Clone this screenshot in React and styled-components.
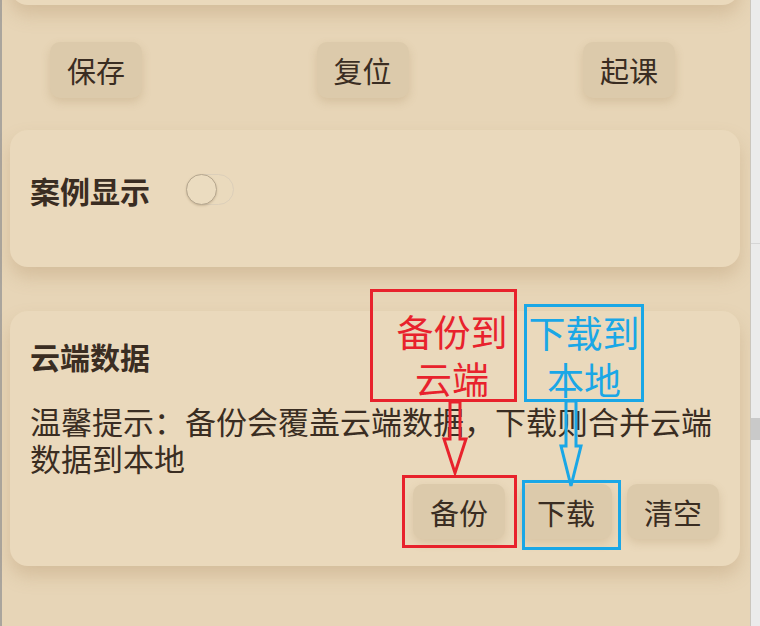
import React, { useState } from "react"
import styled, { createGlobalStyle } from "styled-components"

const GlobalStyle = createGlobalStyle`
  html, body {
    margin: 0;
    padding: 0;
    background: #e7d5b7;
  }
  body {
    font-family: "Noto Sans CJK SC", "Noto Sans", sans-serif;
    color: #3a2d22;
  }
`

const Shell = styled.div`
  display: flex;
  width: 760px;
  height: 626px;
  overflow: hidden;
`

const EdgeLine = styled.div`
  width: 2px;
  background: #aaa59d;
`

const Page = styled.main`
  flex: 1;
  display: flex;
  flex-direction: column;
  padding: 0 10px 0 8px;
  background: #e7d5b7;
`

const Scrollbar = styled.div`
  position: relative;
  width: 9px;
  background: #ebebeb;
  border-left: 1px solid #cbc6bd;
`

const ScrollMark = styled.div`
  position: absolute;
  left: 0;
  right: 0;
  top: ${p => p.top}px;
  height: ${p => p.h}px;
  background: ${p => p.dark ? "#c9c9c9" : "#d6d6d6"};
`

const Card = styled.section`
  position: relative;
  background: #ead9bc;
  border-radius: 18px;
  box-shadow: 0 10px 18px rgba(165, 130, 85, 0.28);
`

const TopCard = styled(Card)`
  height: 50px;
  margin-top: -45px;
`

const ButtonRow = styled.div`
  display: flex;
  justify-content: space-between;
  margin-top: 37px;
  padding: 0 65px 0 40px;
`

const Btn = styled.button`
  width: 92px;
  height: 56px;
  border: none;
  border-radius: 10px;
  background: #dccaab;
  box-shadow: 0 4px 10px rgba(150, 118, 75, 0.22);
  font-family: inherit;
  font-size: 29px;
  color: #3a2d22;
  padding: 0;
  cursor: pointer;
`

const CaseCard = styled(Card)`
  margin-top: 32px;
  height: 137px;
  padding: 40px 20px 0;
  box-sizing: border-box;
  display: flex;
  align-items: flex-start;
  gap: 36px;
`

const Title = styled.h2`
  width: fit-content;
  margin: 0;
  font-size: 30px;
  line-height: 40px;
  font-weight: 700;
  color: #3a2d22;
`

const Track = styled.button`
  position: relative;
  width: 48px;
  height: 31px;
  margin-top: 4px;
  padding: 0;
  border-radius: 16px;
  border: 1px solid #dccfba;
  background: ${p => p.on ? "#d2b98f" : "#eadabd"};
  cursor: pointer;
`

const Thumb = styled.span`
  position: absolute;
  top: -1px;
  left: ${p => p.on ? "17px" : "-1px"};
  width: 29px;
  height: 29px;
  border-radius: 50%;
  border: 1px solid #b6a78f;
  background: #ebdcc0;
  box-shadow: 0 1px 2px rgba(120, 95, 60, 0.25);
`

const CloudCard = styled(Card)`
  margin-top: 44px;
  padding: 25px 21px 27px 20px;
`

const Tip = styled.p`
  margin: 26px 0 0;
  font-size: 31px;
  line-height: 37px;
  color: #3a2d22;
`

const Actions = styled.div`
  display: flex;
  justify-content: flex-end;
  gap: 15px;
  margin-top: 8px;
`

const SmallBtn = styled(Btn)`
  height: 55px;
`

const Note = styled.div`
  position: absolute;
  left: ${p => p.left}px;
  top: ${p => p.top}px;
  width: ${p => p.w}px;
  height: ${p => p.h}px;
  box-sizing: border-box;
  border: 3px solid ${p => p.color};
  padding: ${p => p.pt || 0}px 0 0 ${p => p.pl || 0}px;
  color: ${p => p.color};
  font-size: 37px;
  line-height: 47px;
  text-align: center;
  pointer-events: none;
`

const Arrows = styled.svg`
  position: absolute;
  left: 0;
  top: 0;
  width: 100%;
  height: 100%;
  overflow: visible;
  pointer-events: none;
`

const RED = "#e8222c"
const BLUE = "#1aa7e6"

const App = () => {
  const [showCases, setShowCases] = useState(false)

  return (
    <>
      <GlobalStyle />
      <Shell>
        <EdgeLine />
        <Page>
          <TopCard />
          <ButtonRow>
            <Btn>保存</Btn>
            <Btn>复位</Btn>
            <Btn>起课</Btn>
          </ButtonRow>

          <CaseCard>
            <Title>案例显示</Title>
            <Track on={showCases} onClick={() => setShowCases(!showCases)}>
              <Thumb on={showCases} />
            </Track>
          </CaseCard>

          <CloudCard>
            <Title>云端数据</Title>
            <Tip>温馨提示：备份会覆盖云端数据，下载则合并云端数据到本地</Tip>
            <Actions>
              <SmallBtn>备份</SmallBtn>
              <SmallBtn>下载</SmallBtn>
              <SmallBtn>清空</SmallBtn>
            </Actions>

            {/* annotations drawn over the card */}
            <Note color={RED} left={360} top={-22} w={147} h={113} pt={16} pl={17}>
              备份到<br />云端
            </Note>
            <Note color={BLUE} left={514} top={-7} w={120} h={98} pt={2}>
              下载到<br />本地
            </Note>
            <Note color={RED} left={392} top={164} w={115} h={73} />
            <Note color={BLUE} left={512} top={169} w={99} h={70} />
            <Arrows>
              <polygon
                points="440,91 450,91 450,128 456,128 445,162 434,128 440,128"
                fill="none"
                stroke={RED}
                strokeWidth="3"
              />
              <polygon
                points="556,90 566,90 566,135 571,135 561,175 551,135 556,135"
                fill="none"
                stroke={BLUE}
                strokeWidth="3"
              />
            </Arrows>
          </CloudCard>
        </Page>
        <Scrollbar>
          <ScrollMark top={243} h={1} />
          <ScrollMark top={418} h={22} dark />
        </Scrollbar>
      </Shell>
    </>
  )
}

export default App
